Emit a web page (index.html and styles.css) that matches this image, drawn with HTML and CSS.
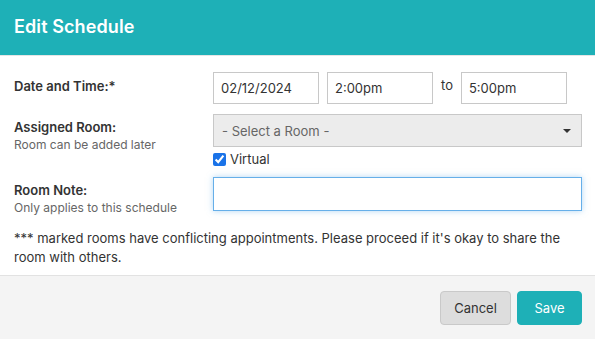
FILE: index.html
```html
<!DOCTYPE html>
<html lang="en">
<head>
  <meta charset="UTF-8" />
  <meta name="viewport" content="width=device-width, initial-scale=1.0" />
  <title>Edit Schedule</title>
  <link rel="stylesheet" href="styles.css">
</head>
<body>
  <div class="modal">
    <div class="modal-header">
      <h1>Edit Schedule</h1>
    </div>

    <div class="modal-body">
      <div class="form-row">
        <div class="label-col">
          <label>Date and Time:*</label>
        </div>
        <div class="field-col datetime">
          <input type="text" class="field short" value="02/12/2024" />
          <input type="text" class="field short" value="2:00pm" />
          <span class="to">to</span>
          <input type="text" class="field short" value="5:00pm" />
        </div>
      </div>

      <div class="form-row room-row">
        <div class="label-col">
          <label>Assigned Room:</label>
          <div class="hint">Room can be added later</div>
        </div>
        <div class="field-col">
          <div class="select">
            <span>- Select a Room -</span>
            <span class="caret"></span>
          </div>
          <label class="check">
            <input type="checkbox" checked />
            <span>Virtual</span>
          </label>
        </div>
      </div>

      <div class="form-row note-row">
        <div class="label-col">
          <label>Room Note:</label>
          <div class="hint">Only applies to this schedule</div>
        </div>
        <div class="field-col">
          <input type="text" class="field wide focused" />
        </div>
      </div>

      <p class="notice">*** marked rooms have conflicting appointments. Please proceed if it's okay to share the room with others.</p>
    </div>

    <div class="modal-footer">
      <button class="btn btn-cancel">Cancel</button>
      <button class="btn btn-save">Save</button>
    </div>
  </div>
</body>
</html>
```

FILE: styles.css
```css
* { box-sizing: border-box; margin: 0; padding: 0; }
body {
  font-family: Inter, 'Noto Sans', sans-serif;
  background: #fff;
  color: #333;
  width: 595px;
  height: 339px;
  overflow: hidden;
}

.modal {
  display: flex;
  flex-direction: column;
  height: 339px;
}

.modal-header {
  background: #1eb0b7;
  height: 56px;
  padding: 0 14px;
  display: flex;
  align-items: center;
  border-bottom: 1px solid #e5e5e5;
}

.modal-header h1 {
  color: #fff;
  font-size: 18px;
  font-weight: 600;
  letter-spacing: 0.1px;
  margin-top: -2px;
}

.modal-body {
  padding: 16px 14px 0 14px;
  flex: 1;
  border-bottom: 1px solid #e2e2e2;
}

.form-row {
  display: flex;
  margin-bottom: 10px;
}

.label-col {
  width: 199px;
  flex-shrink: 0;
}

.label-col label {
  display: block;
  font-size: 13px;
  font-weight: 600;
  color: #333;
  line-height: 18px;
}

.form-row:first-child .label-col label {
  margin-top: 5px;
}

.room-row .label-col label,
.note-row .label-col label {
  margin-top: 4px;
}

.hint {
  font-size: 12px;
  color: #666;
  line-height: 18px;
}

.field-col {
  flex: 1;
}

.datetime {
  display: flex;
  align-items: center;
  gap: 8px;
}

.field {
  height: 32px;
  border: 1px solid #c8c8c8;
  font-family: inherit;
  font-size: 13px;
  color: #333;
  padding: 0 7px;
  background: #fff;
  outline: none;
}

.field.short {
  width: 106px;
}

.to {
  font-size: 13px;
  margin-top: -6px;
}

.select {
  width: 369px;
  height: 33px;
  background: #ececec;
  border: 1px solid #c8c8c8;
  display: flex;
  align-items: center;
  justify-content: space-between;
  padding: 0 10px 0 8px;
  font-size: 13px;
  color: #666;
}

.caret {
  width: 0;
  height: 0;
  border-left: 4px solid transparent;
  border-right: 4px solid transparent;
  border-top: 4px solid #333;
}

.check {
  display: flex;
  align-items: center;
  gap: 4px;
  margin-top: 4px;
  font-size: 13px;
  color: #333;
}

.check input {
  width: 13px;
  height: 13px;
  margin: 0;
  accent-color: #1a73e8;
}

.note-row {
  margin-top: 4px;
}

.field.wide {
  width: 369px;
  height: 34px;
}

.field.focused {
  border-color: #66afe9;
  box-shadow: 0 0 6px rgba(102, 175, 233, 0.5);
}

.notice {
  font-size: 13px;
  line-height: 19px;
  color: #333;
  margin-top: 12px;
}

.modal-footer {
  background: #f4f4f4;
  height: 63px;
  display: flex;
  justify-content: flex-end;
  align-items: flex-start;
  gap: 6px;
  padding: 15px 13px 0 0;
}

.btn {
  height: 34px;
  border-radius: 4px;
  font-family: inherit;
  font-size: 13px;
  cursor: pointer;
}

.btn-cancel {
  width: 71px;
  background: #dddddd;
  border: 1px solid #c9c9c9;
  color: #333;
}

.btn-save {
  width: 65px;
  background: #1eb0b7;
  border: 1px solid #1eb0b7;
  color: #fff;
}
```
